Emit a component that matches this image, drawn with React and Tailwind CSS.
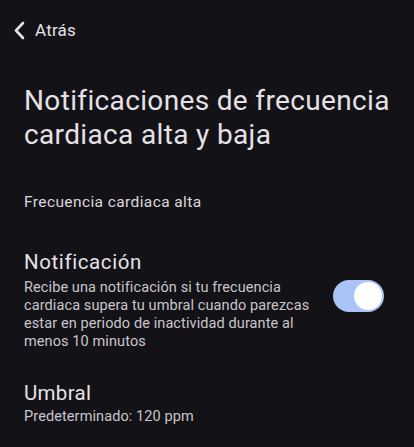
export default function App() {
  return (
    <div
      className="w-[414px] h-[447px] bg-[#131217] text-[#e6e1e6] overflow-hidden"
      style={{ fontFamily: "Roboto, 'Noto Sans', sans-serif" }}
    >
      <div className="flex items-center h-[30px] mt-[15px] pl-[13px]">
        <svg width="12" height="19" viewBox="0 0 12 19" className="shrink-0">
          <path d="M10 2 L3 9.5 L10 17" fill="none" stroke="#e6e1e6" strokeWidth="2.6" strokeLinecap="round" strokeLinejoin="round" />
        </svg>
        <span className="ml-[10px] text-[17px] leading-[24px] tracking-[0.2px]">Atrás</span>
      </div>

      <h1 className="mt-[39px] pl-[24px] text-[28px] leading-[34px] font-normal tracking-[0.35px] whitespace-nowrap">
        <span className="block">Notificaciones de frecuencia</span>
        <span className="block">cardiaca alta y baja</span>
      </h1>

      <div className="mt-[40px] px-[24px] text-[15.5px] leading-[20px] tracking-[0.4px] text-[#dcd8de]">
        Frecuencia cardiaca alta
      </div>

      <div className="mt-[37px] flex items-start pl-[24px] pr-[30px]">
        <div className="flex-1">
          <div className="text-[20.5px] leading-[26px] tracking-[0.6px]">Notificación</div>
          <div className="mt-[4px] text-[14.5px] leading-[18px] tracking-[0.1px] text-[#cac5cd] w-[300px]">
            Recibe una notificación si tu frecuencia cardiaca supera tu umbral cuando parezcas estar en periodo de inactividad durante al menos 10 minutos
          </div>
        </div>
        <div className="relative mt-[31px] w-[51px] h-[32px] rounded-full bg-[#a8c4f7] shrink-0">
          <div className="absolute right-[2px] top-[2px] w-[28px] h-[28px] rounded-full bg-white" />
        </div>
      </div>

      <div className="mt-[29px] px-[24px]">
        <div className="text-[20.5px] leading-[26px] tracking-[0.3px]">Umbral</div>
        <div className="text-[14.5px] leading-[18px] tracking-[0.1px] text-[#cac5cd] mt-[2px]">Predeterminado: 120 ppm</div>
      </div>
    </div>
  );
}
